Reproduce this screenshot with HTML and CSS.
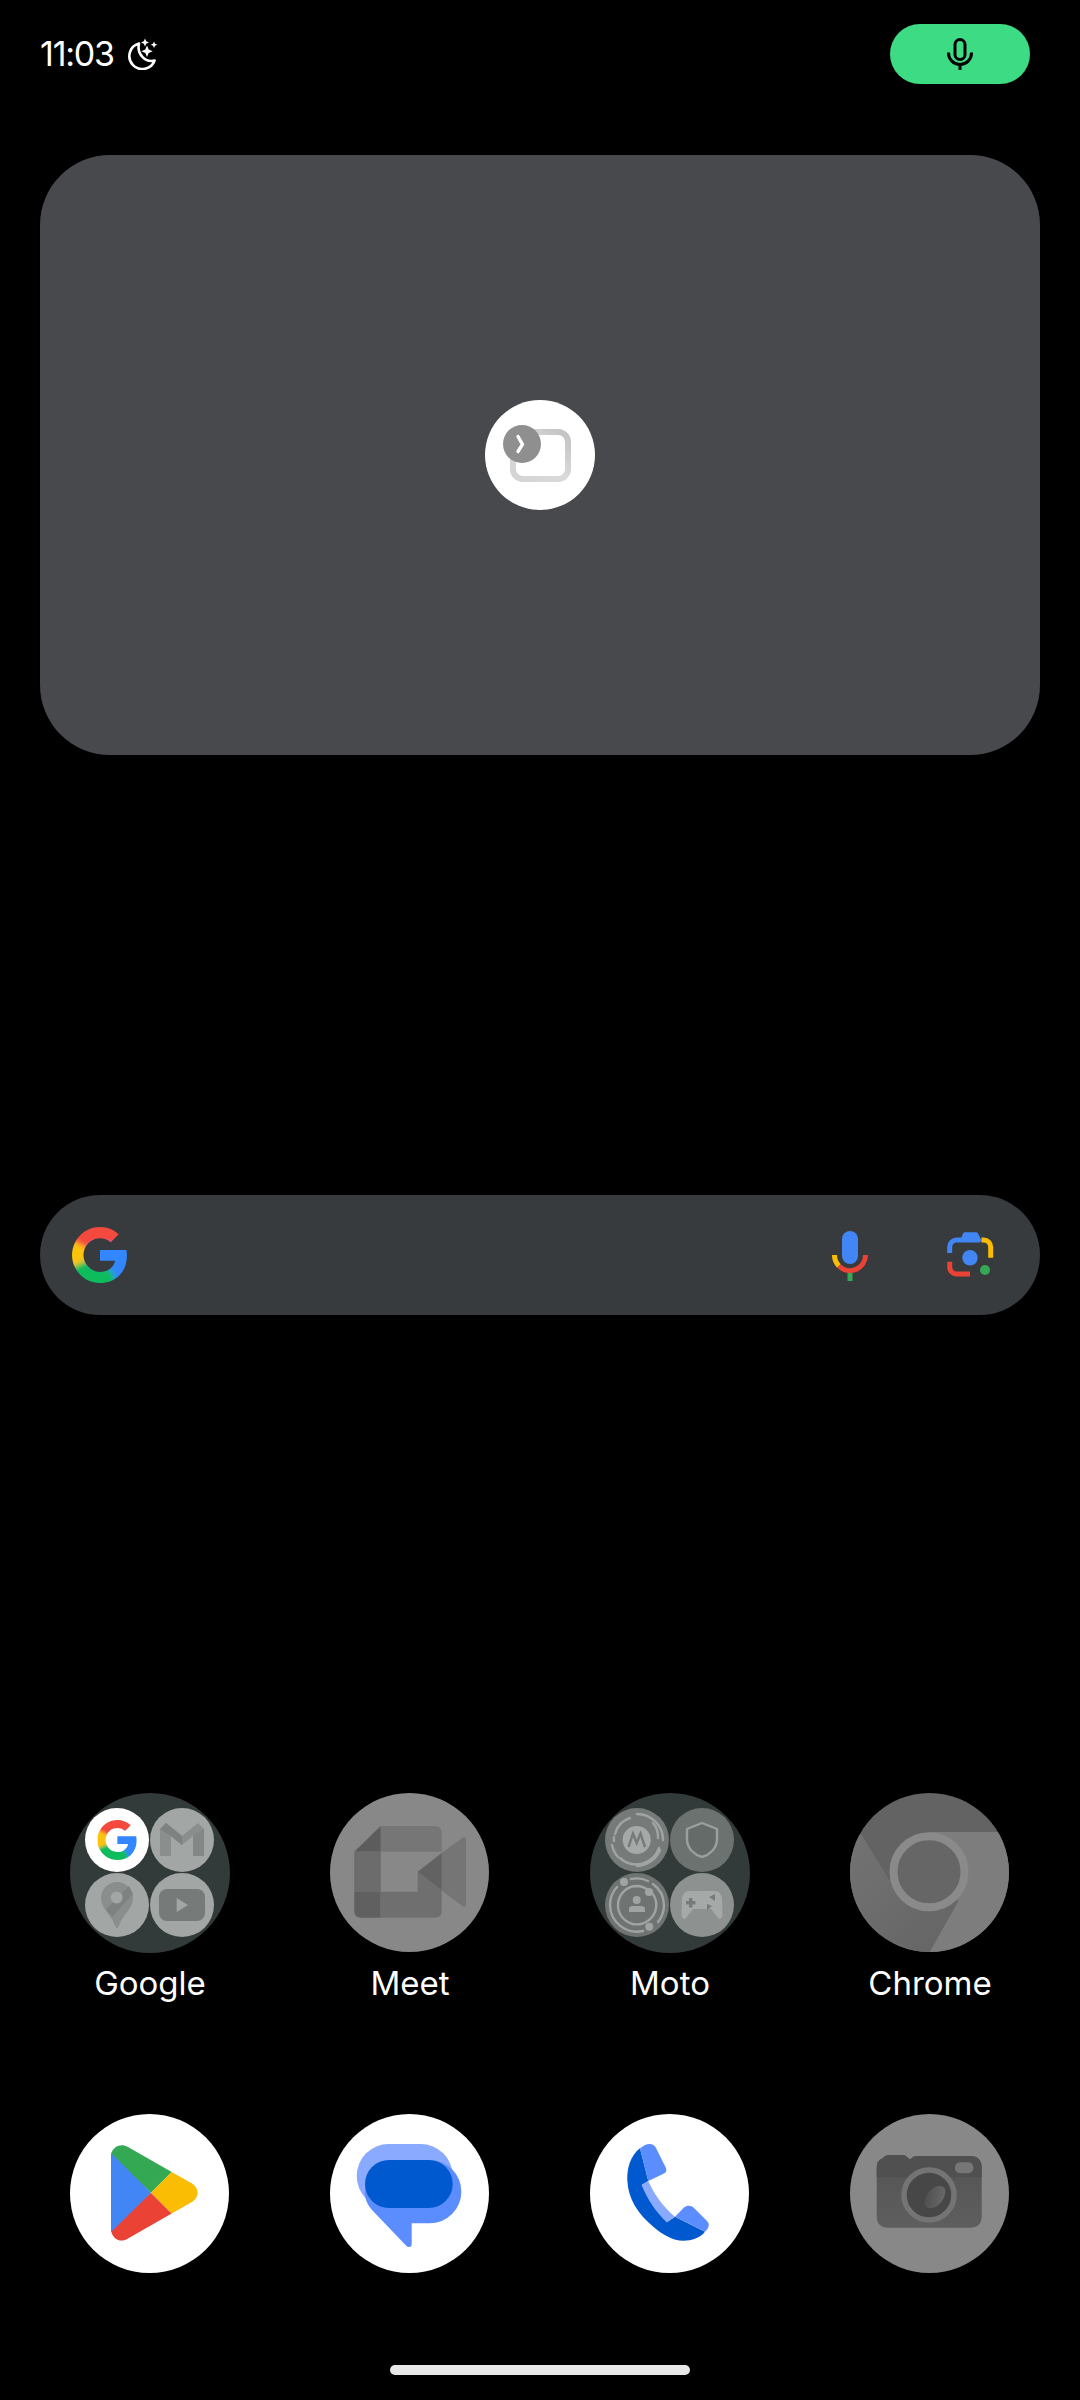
FILE: index.html
```html
<!DOCTYPE html>
<html lang="en">
<head>
<meta charset="utf-8">
<title>Home screen</title>
<link rel="stylesheet" href="styles.css">
</head>
<body>
<div class="screen">
  <header class="status">
    <div class="status-left">
      <span class="time">11:03</span>
      <svg class="moon" viewBox="0 0 32 32" aria-hidden="true">
        <path d="M13 5.5A13 13 0 1 0 28.6 22.5C20 25 10.5 16.5 13 5.5Z" fill="none" stroke="#fff" stroke-width="2.6" stroke-linejoin="round"/>
        <path d="M19 0.5l1.2 2.8 2.8 1.2-2.8 1.2L19 8.5l-1.2-2.8L15 4.5l2.8-1.2zM28 3.5l1 2.3 2.3 1-2.3 1-1 2.3-1-2.3-2.3-1 2.3-1zM21 7.5l1.7 4 4 1.7-4 1.7-1.7 4-1.7-4-4-1.7 4-1.7z" fill="#fff"/>
      </svg>
    </div>
    <div class="mic-pill">
      <svg class="mic-pill-icon" viewBox="0 0 26 32" aria-hidden="true">
        <rect x="8" y="1.5" width="10" height="20" rx="5" fill="none" stroke="#000" stroke-width="3"/>
        <path d="M1.5 14.5V15a11.5 11.5 0 0 0 23 0v-.5M13 26.5V32" fill="none" stroke="#000" stroke-width="3"/>
      </svg>
    </div>
  </header>

  <section class="widget">
    <svg class="widget-badge" viewBox="0 0 110 110" aria-hidden="true">
      <defs>
        <linearGradient id="frame-grad" x1="0" y1="1" x2="1" y2="0">
          <stop offset="0" stop-color="#d4d4d4"/>
          <stop offset="0.5" stop-color="#dadada"/>
          <stop offset="1" stop-color="#c2c2c2"/>
        </linearGradient>
      </defs>
      <circle cx="55" cy="55" r="55" fill="#fff"/>
      <rect x="28" y="32" width="55" height="47" rx="10" fill="none" stroke="url(#frame-grad)" stroke-width="6"/>
      <circle cx="37" cy="44" r="19" fill="#8f8f8f"/>
      <path d="M33 36.5L37.5 44.3L33 51.5" fill="none" stroke="#fff" stroke-width="3.4" stroke-linecap="round" stroke-linejoin="round"/>
    </svg>
  </section>

  <section class="search">
    <svg class="g-icon" viewBox="0 0 55 56" aria-hidden="true">
      <defs>
        <clipPath id="g-clip">
          <path d="M45.12 24.5c0-1.56-.14-3.06-.4-4.5H24v8.51h11.84c-.51 2.75-2.06 5.08-4.39 6.64v5.52h7.11c4.16-3.83 6.56-9.47 6.56-16.17z"/>
          <path d="M24 46c5.94 0 10.92-1.97 14.56-5.33l-7.11-5.52c-1.97 1.32-4.49 2.12-7.45 2.12-5.73 0-10.58-3.87-12.31-9.07H4.34v5.7C7.96 41.07 15.4 46 24 46z"/>
          <path d="M11.69 28.18C11.25 26.86 11 25.45 11 24s.25-2.86.69-4.18v-5.7H4.34C2.85 17.09 2 20.45 2 24c0 3.55.85 6.91 2.34 9.88l7.35-5.7z"/>
          <path d="M24 10.75c3.23 0 6.13 1.11 8.41 3.29l6.31-6.31C34.91 4.18 29.93 2 24 2 15.4 2 7.96 6.93 4.34 14.12l7.35 5.7c1.73-5.2 6.58-9.07 12.31-9.07z"/>
        </clipPath>
        <filter id="g-blur" x="-20%" y="-20%" width="140%" height="140%">
          <feGaussianBlur stdDeviation="2"/>
        </filter>
        <symbol id="g-logo" viewBox="2 2 43.2 44">
          <g clip-path="url(#g-clip)">
            <g filter="url(#g-blur)">
              <rect x="-4" y="-4" width="56" height="56" fill="#f4483e"/>
              <path d="M-4 9L24 24L-4 39Z" fill="#fcc30b"/>
              <path d="M-4 36L24 24L46 52H-4Z" fill="#0fbc5c"/>
              <path d="M16 15H52V52H39L33 36L16 32Z" fill="#3186ff"/>
            </g>
          </g>
        </symbol>
      </defs>
      <use href="#g-logo" width="55" height="56"/>
    </svg>
    <div class="search-actions">
      <svg class="voice-icon" viewBox="0 0 40 52" aria-hidden="true">
        <rect x="12" y="2" width="16" height="33" rx="8" fill="#4285f4"/>
        <path d="M4.5 26A15.5 15.5 0 0 0 9 37" fill="none" stroke="#fbbc04" stroke-width="5"/>
        <path d="M9 37A15.5 15.5 0 0 0 35.5 26" fill="none" stroke="#ea4335" stroke-width="5"/>
        <rect x="17.5" y="44" width="5" height="8" fill="#34a853"/>
      </svg>
      <svg class="lens-icon" viewBox="0 0 50 50" aria-hidden="true">
        <path d="M4.7 23V17A7 7 0 0 1 11.7 10H35" fill="none" stroke="#4285f4" stroke-width="5"/>
        <path d="M15 11.5L18 3.5Q18.6 2.3 20 2.3H31Q32.4 2.3 33 3.5L37 11.5Z" fill="#4285f4"/>
        <path d="M36.5 10H38.7A7 7 0 0 1 45.7 17V27.7" fill="none" stroke="#fbbc04" stroke-width="5"/>
        <path d="M4.7 31.7V37A7 7 0 0 0 11.7 44H25" fill="none" stroke="#ea4335" stroke-width="5"/>
        <circle cx="25" cy="27.7" r="7.7" fill="#4285f4"/>
        <circle cx="40" cy="40" r="5" fill="#34a853"/>
      </svg>
    </div>
  </section>

  <section class="apps">
    <div class="app">
      <svg class="app-icon" viewBox="0 0 160 160" aria-hidden="true">
        <circle cx="80" cy="80" r="80" fill="#323b39"/>
        <circle cx="47" cy="47" r="32" fill="#fff"/>
        <use href="#g-logo" x="27" y="27" width="40" height="40"/>
        <circle cx="112" cy="47" r="32" fill="#a2a6a4"/>
        <path d="M90 36L96 30L112 43L128 30L134 36V63H123V43L112 52L101 43V63H90Z" fill="#8a8e8c"/>
        <path d="M90 36L96 30L112 43V52L101 43L90 36Z" fill="#7e8280"/>
        <path d="M123 43L134 36V63H123Z" fill="#838785"/>
        <circle cx="47" cy="112" r="32" fill="#a2a6a4"/>
        <path d="M47 89A16 16 0 0 1 63 105C63 116 52 122 49 133Q47 137 45 133C42 122 31 116 31 105A16 16 0 0 1 47 89Z" fill="#8a8e8c"/>
        <path d="M36 116L59 93L63 101L42 124Z" fill="#7e8280"/>
        <circle cx="46.7" cy="104.5" r="6" fill="#a2a6a4"/>
        <circle cx="112" cy="112" r="32" fill="#a2a6a4"/>
        <rect x="89" y="96" width="46" height="32" rx="8" fill="#767a78"/>
        <path d="M106.7 105L118 112L106.7 119Z" fill="#a2a6a4"/>
      </svg>
      <span class="app-label">Google</span>
    </div>
    <div class="app">
      <svg class="app-icon" viewBox="0 0 160 160" aria-hidden="true">
        <circle cx="79.5" cy="79.5" r="79.5" fill="#888"/>
        <path d="M136 46.5Q136 43.5 133 44.5L111.7 60V97.5L133 113.5Q136 114.7 136 111Z" fill="#757575"/>
        <path d="M50.7 33H105Q111.7 33 111.7 40V58.7H50.7Z" fill="#767676"/>
        <path d="M24.3 58.7L50.7 33V58.7Z" fill="#5c5c5c"/>
        <rect x="24.3" y="58.7" width="26.4" height="40" fill="#6c6c6c"/>
        <path d="M24.3 98.7H50.7V124.7H31Q24.3 124.7 24.3 118Z" fill="#606060"/>
        <path d="M50.7 98.7H87.7V78.7L111.7 97.5V118Q111.7 124.7 105 124.7H50.7Z" fill="#6f6f6f"/>
        <path d="M87.7 78.7L111.7 60V97.5Z" fill="#626262"/>
      </svg>
      <span class="app-label">Meet</span>
    </div>
    <div class="app">
      <svg class="app-icon" viewBox="0 0 160 160" aria-hidden="true">
        <circle cx="80" cy="80" r="80" fill="#323b39"/>
        <circle cx="47" cy="47" r="32" fill="#767b79"/>
        <g fill="none" stroke="#a0a5a3" stroke-width="2.4" stroke-linecap="round">
          <path d="M25 41A23 23 0 0 1 40 25"/>
          <path d="M47 21A26 26 0 0 1 73 47"/>
          <path d="M69 55A24 24 0 0 1 30 65"/>
          <path d="M70 57A26 26 0 0 1 47 73"/>
          <path d="M22 52A26 26 0 0 0 28 64"/>
          <path d="M24 48A23 23 0 0 1 24 44"/>
          <path d="M63 30A21 21 0 0 1 68 45"/>
        </g>
        <circle cx="46.7" cy="47" r="14" fill="#a5aaa8"/>
        <path d="M38.5 54L43 40.5L46.7 50L50.5 40.5L55 54" fill="none" stroke="#767b79" stroke-width="2.4" stroke-linejoin="miter"/>
        <circle cx="112" cy="47" r="32" fill="#6c7270"/>
        <path d="M112 30L127 36V46C127 56 119 62 112 64C105 62 97 56 97 46V36Z" fill="#656b69" stroke="#9aa09e" stroke-width="2.4" stroke-linejoin="round"/>
        <circle cx="47" cy="112" r="32" fill="#6f7472"/>
        <g fill="none" stroke="#a0a5a3" stroke-width="2.4" stroke-linecap="round">
          <path d="M41 86A27 27 0 0 1 58 88"/>
          <path d="M63 91A27 27 0 0 1 74 112A27 27 0 0 1 68 129"/>
          <path d="M53 138A27 27 0 0 1 20 112A27 27 0 0 1 27 94"/>
          <path d="M62 100A19 19 0 0 1 62 124A19 19 0 0 1 28 112A19 19 0 0 1 47 93A19 19 0 0 1 58 97"/>
        </g>
        <circle cx="34" cy="89" r="4" fill="#a0a5a3"/>
        <circle cx="59" cy="99" r="4" fill="#a0a5a3"/>
        <circle cx="59.3" cy="133.7" r="4" fill="#a0a5a3"/>
        <circle cx="46.7" cy="107" r="4" fill="#a0a5a3"/>
        <path d="M39 119V116Q39 113 43 113H51Q55 113 55 116V119Z" fill="#a0a5a3"/>
        <circle cx="112" cy="112" r="32" fill="#8d9290"/>
        <path d="M99 98H125Q131 98 132 106L132.5 122Q132 126 129 126L121 116H103L95 126Q92 126 91.5 122L92 106Q93 98 99 98Z" fill="#a5aaa8"/>
        <path d="M99 105h3.4v3h3v3.4h-3v3H99v-3h-3v-3.4h3z" fill="#767b79"/>
        <path d="M119 104L125 101L125 108ZM117 111L122 113L117 117Z" fill="#767b79"/>
      </svg>
      <span class="app-label">Moto</span>
    </div>
    <div class="app">
      <svg class="app-icon" viewBox="0 0 160 160" aria-hidden="true">
        <defs>
          <clipPath id="chrome-clip"><circle cx="79.5" cy="79.5" r="79.5"/></clipPath>
          <linearGradient id="chrome-left" x1="0" y1="0" x2="1" y2="1">
            <stop offset="0" stop-color="#737373"/>
            <stop offset="1" stop-color="#646464"/>
          </linearGradient>
        </defs>
        <g clip-path="url(#chrome-clip)">
          <rect width="160" height="160" fill="#636363"/>
          <path d="M-2 42H11.7L39.3 87L79 78.7L108 108.7L79 160H-2Z" fill="url(#chrome-left)"/>
          <path d="M79 39H162V162H78L108 108.7Z" fill="#7d7d7d"/>
        </g>
        <circle cx="79" cy="78.7" r="35.5" fill="#666" stroke="#8a8a8a" stroke-width="8"/>
      </svg>
      <span class="app-label">Chrome</span>
    </div>
  </section>

  <nav class="dock">
    <svg class="app-icon" viewBox="0 0 160 160" aria-hidden="true">
      <circle cx="79.5" cy="79.5" r="79.5" fill="#fff"/>
      <path d="M41 42C41 34 50 28 58 33L101.7 58L81 78.7Z" fill="#34a853"/>
      <path d="M41 115C41 124 50 130 58 124.5L101.7 99.5L81 78.7Z" fill="#ea4335"/>
      <path d="M101.7 58L122 69.5C129.5 74 129.5 83.5 122 88L101.7 99.5L81 78.7Z" fill="#fbbc04"/>
      <path d="M41 39L81 78.7L41 118Z" fill="#4285f4"/>
    </svg>
    <svg class="app-icon" viewBox="0 0 160 160" aria-hidden="true">
      <circle cx="79.5" cy="79.5" r="79.5" fill="#fff"/>
      <rect x="26.7" y="30" width="96" height="64" rx="32" fill="#8aaaff"/>
      <path d="M67 46H99.7A31.6 31.6 0 0 1 99.7 109.3H81.7V130Q81.7 133 79 133Q77.5 133 76 131.5L42 96C37 90 35 85 35 78A32 32 0 0 1 67 46Z" fill="#5b8dff"/>
      <rect x="35" y="46" width="87.7" height="48" rx="24" fill="#0059cf"/>
    </svg>
    <svg class="app-icon" viewBox="0 0 160 160" aria-hidden="true">
      <circle cx="79.5" cy="79.5" r="79.5" fill="#fff"/>
      <path d="M50 34.3C40 42 37 55 37.3 66C38 85 48 100 63.3 112.7C73 121 83 126.7 93.3 126.7C102 126.7 110 124 115 117.7L85 102.7L76.7 108.3L51.7 71L58.3 67Z" fill="#0059cf"/>
      <path d="M51.7 71L58.3 67C64 80 73 93 85 102.7L76.7 108.3C66 98 57 85 51.7 71Z" fill="#8aaaff"/>
      <path d="M50 34.3L55 31C60 29 64 30 66 34L76 54C77 57 76 59 73 60L58.3 67Z" fill="#5b8dff"/>
      <path d="M85 102.7L94 93.5C97 91 101 91 104 94L117 107C120 110 119 114 115 117.7Z" fill="#5b8dff"/>
    </svg>
    <svg class="app-icon" viewBox="0 0 160 160" aria-hidden="true">
      <defs>
        <linearGradient id="cam-body" x1="0" y1="0" x2="0" y2="1">
          <stop offset="0" stop-color="#545454"/>
          <stop offset="1" stop-color="#5e5e5e"/>
        </linearGradient>
        <linearGradient id="cam-glint" x1="0" y1="1" x2="1" y2="0">
          <stop offset="0" stop-color="#4a4a4a"/>
          <stop offset="1" stop-color="#6e6e6e"/>
        </linearGradient>
      </defs>
      <circle cx="79.5" cy="79.5" r="79.5" fill="#888"/>
      <path d="M33 44Q35 41 40 41H52Q56 41 58 44Q60 46 62 44Q63 42 68 42H120Q131.7 42 131.7 54V102Q131.7 113.7 120 113.7H38Q26.7 113.7 26.7 102V54Q26.7 46 33 44Z" fill="url(#cam-body)"/>
      <path d="M26.7 63.3V54Q26.7 46 33 44Q35 41 40 41H52Q56 41 58 44Q60 46 62 44Q63 42 68 42H120Q131.7 42 131.7 54V63.3Z" fill="#505050"/>
      <rect x="105" y="48.3" width="18.3" height="11" rx="5" fill="#767676"/>
      <circle cx="79" cy="81" r="25" fill="#474747" stroke="#747474" stroke-width="5.5"/>
      <ellipse cx="85" cy="83" rx="8" ry="13" transform="rotate(40 85 83)" fill="url(#cam-glint)"/>
    </svg>
  </nav>

  <div class="home-bar"></div>
</div>
</body>
</html>
```

FILE: styles.css
```css
* {
  box-sizing: border-box;
}

html,
body {
  margin: 0;
  padding: 0;
  background: #000;
}

.screen {
  display: flex;
  flex-direction: column;
  width: 1080px;
  height: 2400px;
  overflow: hidden;
  background: #000;
  color: #fff;
  font-family: Inter, "Liberation Sans", sans-serif;
}

.status {
  display: flex;
  align-items: center;
  justify-content: space-between;
  height: 60px;
  margin: 24px 50px 0 40px;
}

.status-left {
  display: flex;
  align-items: center;
  gap: 12px;
}

.time {
  font-size: 34px;
  line-height: 60px;
  letter-spacing: -1.2px;
}

.moon {
  display: block;
  width: 32px;
  height: 32px;
}

.mic-pill {
  display: flex;
  align-items: center;
  justify-content: center;
  width: 140px;
  height: 60px;
  border-radius: 30px;
  background: #3ddc84;
}

.mic-pill-icon {
  display: block;
  width: 26px;
  height: 32px;
}

.widget {
  display: flex;
  justify-content: center;
  height: 600px;
  margin: 71px 40px 0;
  padding-top: 245px;
  border-radius: 70px;
  background: #47494c;
}

.widget-badge {
  display: block;
  width: 110px;
  height: 110px;
}

.search {
  display: flex;
  align-items: center;
  justify-content: space-between;
  height: 120px;
  margin: 440px 40px 0;
  padding: 0 45px 0 32px;
  border-radius: 60px;
  background: #373b3e;
}

.g-icon {
  display: block;
  width: 55px;
  height: 56px;
}

.search-actions {
  display: flex;
  align-items: center;
  gap: 75px;
}

.voice-icon {
  display: block;
  width: 40px;
  height: 52px;
}

.lens-icon {
  display: block;
  width: 50px;
  height: 50px;
}

.apps,
.dock {
  display: grid;
  grid-template-columns: repeat(4, 260px);
  justify-items: center;
  padding: 0 20px;
}

.apps {
  margin-top: 478px;
}

.dock {
  margin-top: 110px;
}

.app {
  display: flex;
  flex-direction: column;
  align-items: center;
}

.app-icon {
  display: block;
  width: 160px;
  height: 160px;
}

.app-label {
  margin-top: 10px;
  font-size: 33px;
  line-height: 41px;
  text-align: center;
}

.home-bar {
  width: 300px;
  height: 10px;
  margin: 91px auto 0;
  border-radius: 5px;
  background: #e8e8e8;
}
```
